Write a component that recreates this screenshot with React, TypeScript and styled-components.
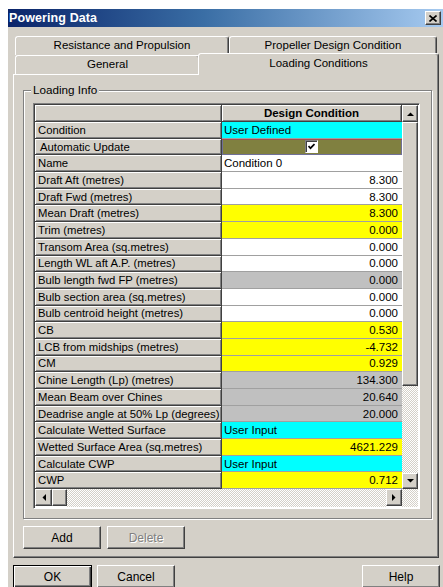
import React from 'react';
import styled, { createGlobalStyle, css } from 'styled-components';

const FACE = '#d4d0c8';

const GlobalStyle = createGlobalStyle`
  html, body {
    margin: 0;
    padding: 0;
    background: #ffffff;
  }
  body {
    width: 443px;
    height: 587px;
    overflow: hidden;
    font-family: "Liberation Sans", Arial, sans-serif;
    color: #000000;
  }
`;

const raisedEdge = css`
  border: 1px solid;
  border-color: #ffffff #404040 #404040 #ffffff;
  box-shadow: inset -1px -1px 0 #808080;
`;

const ditherTrack = css`
  background: repeating-conic-gradient(${FACE} 0 25%, #ffffff 0 50%) 0 0 / 2px 2px;
`;

const Window = styled.div`
  margin: 9px 0 0 8px;
  width: 435px;
  height: 578px;
  background: ${FACE};
  display: flex;
  flex-direction: column;
`;

const TitleBar = styled.div`
  height: 18px;
  flex: none;
  display: flex;
  align-items: center;
  justify-content: space-between;
  padding: 0 2px 0 1px;
  background: linear-gradient(to right, #0a246a 0%, #3a6ea5 45%, #a6caf0 100%);
`;

const TitleText = styled.span`
  color: #ffffff;
  font-weight: bold;
  font-size: 12.5px;
  letter-spacing: 0.1px;
`;

const CloseButton = styled.div`
  width: 16px;
  height: 14px;
  box-sizing: border-box;
  background: ${FACE};
  ${raisedEdge};
  display: flex;
  align-items: center;
  justify-content: center;
`;

const Body = styled.div`
  flex: 1;
  display: flex;
  flex-direction: column;
  padding: 9px 4px 0 5px;
`;

const TabRow = styled.div`
  display: flex;
  align-items: flex-end;
  height: 19px;
  margin: 0 2px;
`;

const Tab = styled.div<{ $width?: number; $active?: boolean }>`
  box-sizing: border-box;
  height: 19px;
  ${(p) => (p.$width ? `width: ${p.$width}px; flex: none;` : 'flex: 1;')}
  background: ${FACE};
  border: 1px solid;
  border-bottom: none;
  border-color: #ffffff #404040 transparent #ffffff;
  border-radius: 3px 3px 0 0;
  box-shadow: inset -1px 0 0 #808080;
  font-size: 11.5px;
  line-height: 17px;
  text-align: center;
  white-space: nowrap;
  ${(p) =>
    p.$active &&
    css`
      height: 22px;
      margin: 0 -2px -1px -2px;
      line-height: 18px;
      position: relative;
      z-index: 1;
    `}
`;

const Panel = styled.div`
  box-sizing: border-box;
  ${raisedEdge};
  background: ${FACE};
  padding: 8px 6px 8px 9px;
  display: flex;
  flex-direction: column;
`;

const GroupBox = styled.fieldset`
  margin: 0;
  padding: 6px 11px 9px 9px;
  border: 1px solid #808080;
  box-shadow: inset 1px 1px 0 #ffffff, 1px 1px 0 #ffffff;
  min-width: 0;
`;

const GroupLegend = styled.legend`
  margin-left: -2px;
  padding: 0 2px;
  font-size: 11.7px;
  line-height: 14px;
  background: ${FACE};
`;

const GridFrame = styled.div`
  box-sizing: border-box;
  width: 387px;
  height: 406px;
  padding: 1px;
  border: 1px solid;
  border-color: #808080 #ffffff #ffffff #808080;
  box-shadow: inset 1px 1px 0 #404040;
  display: grid;
  grid-template-columns: 187px 180px 16px;
  grid-template-rows: 17px repeat(22, 16.7px) 1fr;
  background: #ffffff;
  overflow: hidden;
`;

const HeaderCell = styled.div`
  box-sizing: border-box;
  background: ${FACE};
  border-right: 1px solid #404040;
  border-bottom: 1px solid #404040;
  box-shadow: inset 1px 1px 0 #ffffff, inset -1px -1px 0 #808080;
  font-size: 11.5px;
  font-weight: bold;
  display: flex;
  align-items: center;
  justify-content: center;
`;

const LabelCell = styled.div<{ $indent?: boolean }>`
  box-sizing: border-box;
  background: ${FACE};
  border-right: 1px solid #404040;
  border-bottom: 1px solid #404040;
  box-shadow: inset 1px 1px 0 #ffffff, inset -1px -1px 0 #808080;
  padding-left: ${(p) => (p.$indent ? 5 : 3)}px;
  font-size: 11.3px;
  display: flex;
  align-items: center;
  white-space: nowrap;
  overflow: hidden;
`;

const FILLS = {
  white: '#ffffff',
  yellow: '#ffff00',
  cyan: '#00ffff',
  grey: '#c0c0c0',
  olive: '#808040',
} as const;

type Fill = keyof typeof FILLS;

const ValueCell = styled.div<{ $fill: Fill; $align: 'left' | 'right' | 'center' }>`
  box-sizing: border-box;
  background: ${(p) => FILLS[p.$fill]};
  border-bottom: 1px solid #a0a0a0;
  padding: 0 4px 0 2px;
  font-size: 11.5px;
  display: flex;
  align-items: center;
  justify-content: ${(p) =>
    p.$align === 'right' ? 'flex-end' : p.$align === 'center' ? 'center' : 'flex-start'};
  white-space: nowrap;
  ${(p) =>
    p.$fill === 'olive' &&
    css`
      border-bottom-color: #707098;
      box-shadow: inset 0 1px 0 #a05050, inset 1px 0 0 #707098, inset -1px 0 0 #707098;
    `}
`;

const CheckBox = styled.div`
  box-sizing: border-box;
  width: 13px;
  height: 13px;
  background: #ffffff;
  border: 1px solid;
  border-color: #808080 #ffffff #ffffff #808080;
  box-shadow: inset 1px 1px 0 #404040;
  display: flex;
  align-items: center;
  justify-content: center;
`;

const VScroll = styled.div`
  grid-column: 3;
  grid-row: 1 / span 23;
  display: flex;
  flex-direction: column;
`;

const HScroll = styled.div`
  grid-column: 1 / span 2;
  grid-row: 24;
  display: flex;
`;

const Corner = styled.div`
  grid-column: 3;
  grid-row: 24;
  ${ditherTrack};
`;

const ScrollButton = styled.div<{ $w: number; $h: number }>`
  box-sizing: border-box;
  flex: none;
  width: ${(p) => p.$w}px;
  height: ${(p) => p.$h}px;
  background: ${FACE};
  ${raisedEdge};
  display: flex;
  align-items: center;
  justify-content: center;
`;

const ScrollTrack = styled.div`
  flex: 1;
  ${ditherTrack};
`;

const ButtonRow = styled.div<{ $spread?: boolean }>`
  display: flex;
  gap: 6px;
  margin-top: 7px;
  ${(p) =>
    p.$spread &&
    css`
      gap: 5px;
      margin-right: -1px;
    `}
`;

const Button = styled.div<{ $width: number; $default?: boolean; $disabled?: boolean; $push?: boolean }>`
  box-sizing: border-box;
  width: ${(p) => p.$width}px;
  height: 23px;
  background: ${FACE};
  ${raisedEdge};
  font-size: 12px;
  display: flex;
  align-items: center;
  justify-content: center;
  ${(p) => p.$push && 'margin-left: auto;'}
  ${(p) =>
    p.$default &&
    css`
      border-color: #000000;
      box-shadow: inset 1px 1px 0 #ffffff, inset -1px -1px 0 #404040, inset -2px -2px 0 #808080;
    `}
  ${(p) =>
    p.$disabled &&
    css`
      color: #808080;
      text-shadow: 1px 1px 0 #ffffff;
    `}
`;

const Arrow: React.FC<{ dir: 'up' | 'down' | 'left' | 'right' }> = ({ dir }) => {
  const points = {
    up: '0,4 3.5,0.5 7,4',
    down: '0,0 7,0 3.5,3.5',
    left: '4,0 4,7 0.5,3.5',
    right: '0,0 0,7 3.5,3.5',
  }[dir];
  const vertical = dir === 'up' || dir === 'down';
  return (
    <svg width={vertical ? 7 : 4} height={vertical ? 4 : 7} viewBox={vertical ? '0 0 7 4' : '0 0 4 7'}>
      <polygon points={points} fill="#000000" />
    </svg>
  );
};

type Row = { label: string; value?: string; fill: Fill; align?: 'left' | 'right'; check?: boolean; indent?: boolean };

const rows: Row[] = [
  { label: 'Condition', value: 'User Defined', fill: 'cyan', align: 'left' },
  { label: 'Automatic Update', fill: 'olive', check: true, indent: true },
  { label: 'Name', value: 'Condition 0', fill: 'white', align: 'left' },
  { label: 'Draft Aft (metres)', value: '8.300', fill: 'white' },
  { label: 'Draft Fwd (metres)', value: '8.300', fill: 'white' },
  { label: 'Mean Draft (metres)', value: '8.300', fill: 'yellow' },
  { label: 'Trim (metres)', value: '0.000', fill: 'yellow' },
  { label: 'Transom Area (sq.metres)', value: '0.000', fill: 'white' },
  { label: 'Length WL aft A.P. (metres)', value: '0.000', fill: 'white' },
  { label: 'Bulb length fwd FP (metres)', value: '0.000', fill: 'grey' },
  { label: 'Bulb section area (sq.metres)', value: '0.000', fill: 'white' },
  { label: 'Bulb centroid height (metres)', value: '0.000', fill: 'white' },
  { label: 'CB', value: '0.530', fill: 'yellow' },
  { label: 'LCB from midships (metres)', value: '-4.732', fill: 'yellow' },
  { label: 'CM', value: '0.929', fill: 'yellow' },
  { label: 'Chine Length (Lp) (metres)', value: '134.300', fill: 'grey' },
  { label: 'Mean Beam over Chines', value: '20.640', fill: 'grey' },
  { label: 'Deadrise angle at 50% Lp (degrees)', value: '20.000', fill: 'grey' },
  { label: 'Calculate Wetted Surface', value: 'User Input', fill: 'cyan', align: 'left' },
  { label: 'Wetted Surface Area (sq.metres)', value: '4621.229', fill: 'yellow' },
  { label: 'Calculate CWP', value: 'User Input', fill: 'cyan', align: 'left' },
  { label: 'CWP', value: '0.712', fill: 'yellow' },
];

const App: React.FC = () => {
  return (
    <>
      <GlobalStyle />
      <Window>
        <TitleBar>
          <TitleText>Powering Data</TitleText>
          <CloseButton>
            <svg width="8" height="7" viewBox="0 0 8 7">
              <path d="M0.5 0.5 L7.5 6.5 M7.5 0.5 L0.5 6.5" stroke="#000" strokeWidth="1.6" />
            </svg>
          </CloseButton>
        </TitleBar>

        <Body>
          <TabRow>
            <Tab $width={214}>Resistance and Propulsion</Tab>
            <Tab>Propeller Design Condition</Tab>
          </TabRow>
          <TabRow>
            <Tab $width={185}>General</Tab>
            <Tab $active>Loading Conditions</Tab>
          </TabRow>

          <Panel>
            <GroupBox>
              <GroupLegend>Loading Info</GroupLegend>
              <GridFrame>
                <HeaderCell />
                <HeaderCell>Design Condition</HeaderCell>
                <VScroll>
                  <ScrollButton $w={16} $h={17}>
                    <Arrow dir="up" />
                  </ScrollButton>
                  <ScrollButton $w={16} $h={264} />
                  <ScrollTrack />
                  <ScrollButton $w={16} $h={16}>
                    <Arrow dir="down" />
                  </ScrollButton>
                </VScroll>

                {rows.map((r) => (
                  <React.Fragment key={r.label}>
                    <LabelCell $indent={r.indent}>{r.label}</LabelCell>
                    <ValueCell $fill={r.fill} $align={r.check ? 'center' : r.align ?? 'right'}>
                      {r.check ? (
                        <CheckBox>
                          <svg width="7" height="7" viewBox="0 0 7 7">
                            <path d="M0.5 3 L2.5 5.2 L6.5 1" stroke="#000" strokeWidth="1.7" fill="none" />
                          </svg>
                        </CheckBox>
                      ) : (
                        r.value
                      )}
                    </ValueCell>
                  </React.Fragment>
                ))}

                <HScroll>
                  <ScrollButton $w={17} $h={17}>
                    <Arrow dir="left" />
                  </ScrollButton>
                  <ScrollButton $w={15} $h={17} />
                  <ScrollTrack />
                  <ScrollButton $w={16} $h={17}>
                    <Arrow dir="right" />
                  </ScrollButton>
                </HScroll>
                <Corner />
              </GridFrame>
            </GroupBox>

            <ButtonRow>
              <Button $width={78}>Add</Button>
              <Button $width={78} $disabled>
                Delete
              </Button>
            </ButtonRow>
          </Panel>

          <ButtonRow $spread>
            <Button $width={79} $default>
              OK
            </Button>
            <Button $width={78}>Cancel</Button>
            <Button $width={78} $push>
              Help
            </Button>
          </ButtonRow>
        </Body>
      </Window>
    </>
  );
};

export default App;
